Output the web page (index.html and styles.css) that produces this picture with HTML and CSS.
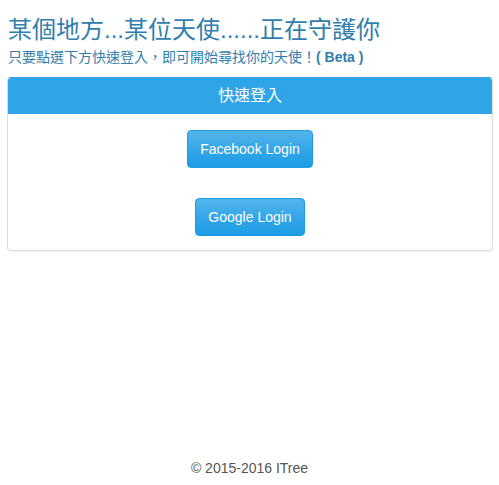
FILE: index.html
```html
<!DOCTYPE html>
<html>
<head>
<meta charset="utf-8">
<link rel="stylesheet" href="styles.css">
</head>
<body>
<div class="page">
  <div class="container">
    <h3 class="title">某個地方...某位天使......正在守護你</h3>
    <p class="lead-text">只要點選下方快速登入，即可開始尋找你的天使！<b>( Beta )</b></p>
    <div class="panel">
      <div class="panel-heading">快速登入</div>
      <div class="panel-body">
        <button class="btn">Facebook Login</button>
        <button class="btn">Google Login</button>
      </div>
    </div>
  </div>
  <footer class="footer">© 2015-2016 ITree</footer>
</div>
</body>
</html>
```
FILE: styles.css
```css
* { box-sizing: border-box; }
html, body { margin: 0; height: 100%; }
body {
  font-family: "Liberation Sans", Arial, "Noto Sans CJK TC", sans-serif;
  font-size: 14px;
  line-height: 1.42857;
  color: #555555;
  background: #fff;
}
.page {
  min-height: 100%;
  display: flex;
  flex-direction: column;
}
.container {
  padding: 0 6px 0 7px;
  flex: 1;
}
.title {
  margin: 17px 0 0 1px;
  font-size: 24px;
  font-weight: 400;
  line-height: 1.1;
  color: #317eac;
}
.lead-text {
  margin: 5px 0 9px 1px;
  font-size: 14px;
  color: #317eac;
}
.lead-text b { font-weight: 700; }
.panel {
  border: 1px solid #dddddd;
  border-top-color: #2fa4e7;
  border-radius: 4px;
  box-shadow: 0 1px 1px rgba(0,0,0,0.05);
  overflow: hidden;
}
.panel-heading {
  background: #2fa4e7;
  color: #fff;
  text-align: center;
  font-size: 16px;
  padding: 8px 15px;
  line-height: 20px;
}
.panel-body {
  padding: 16px 15px 14px;
  display: flex;
  flex-direction: column;
  align-items: center;
  gap: 30px;
}
.btn {
  font-family: inherit;
  font-size: 14px;
  line-height: 20px;
  padding: 8px 12px;
  color: #fff;
  border: 1px solid #1d9ce5;
  border-radius: 4px;
  background-image: linear-gradient(#54b4eb, #2fa4e7 60%, #1d9ce5);
  cursor: pointer;
}
.footer {
  text-align: center;
  color: #555555;
  padding: 0 0 7px;
  line-height: 20px;
}
```
